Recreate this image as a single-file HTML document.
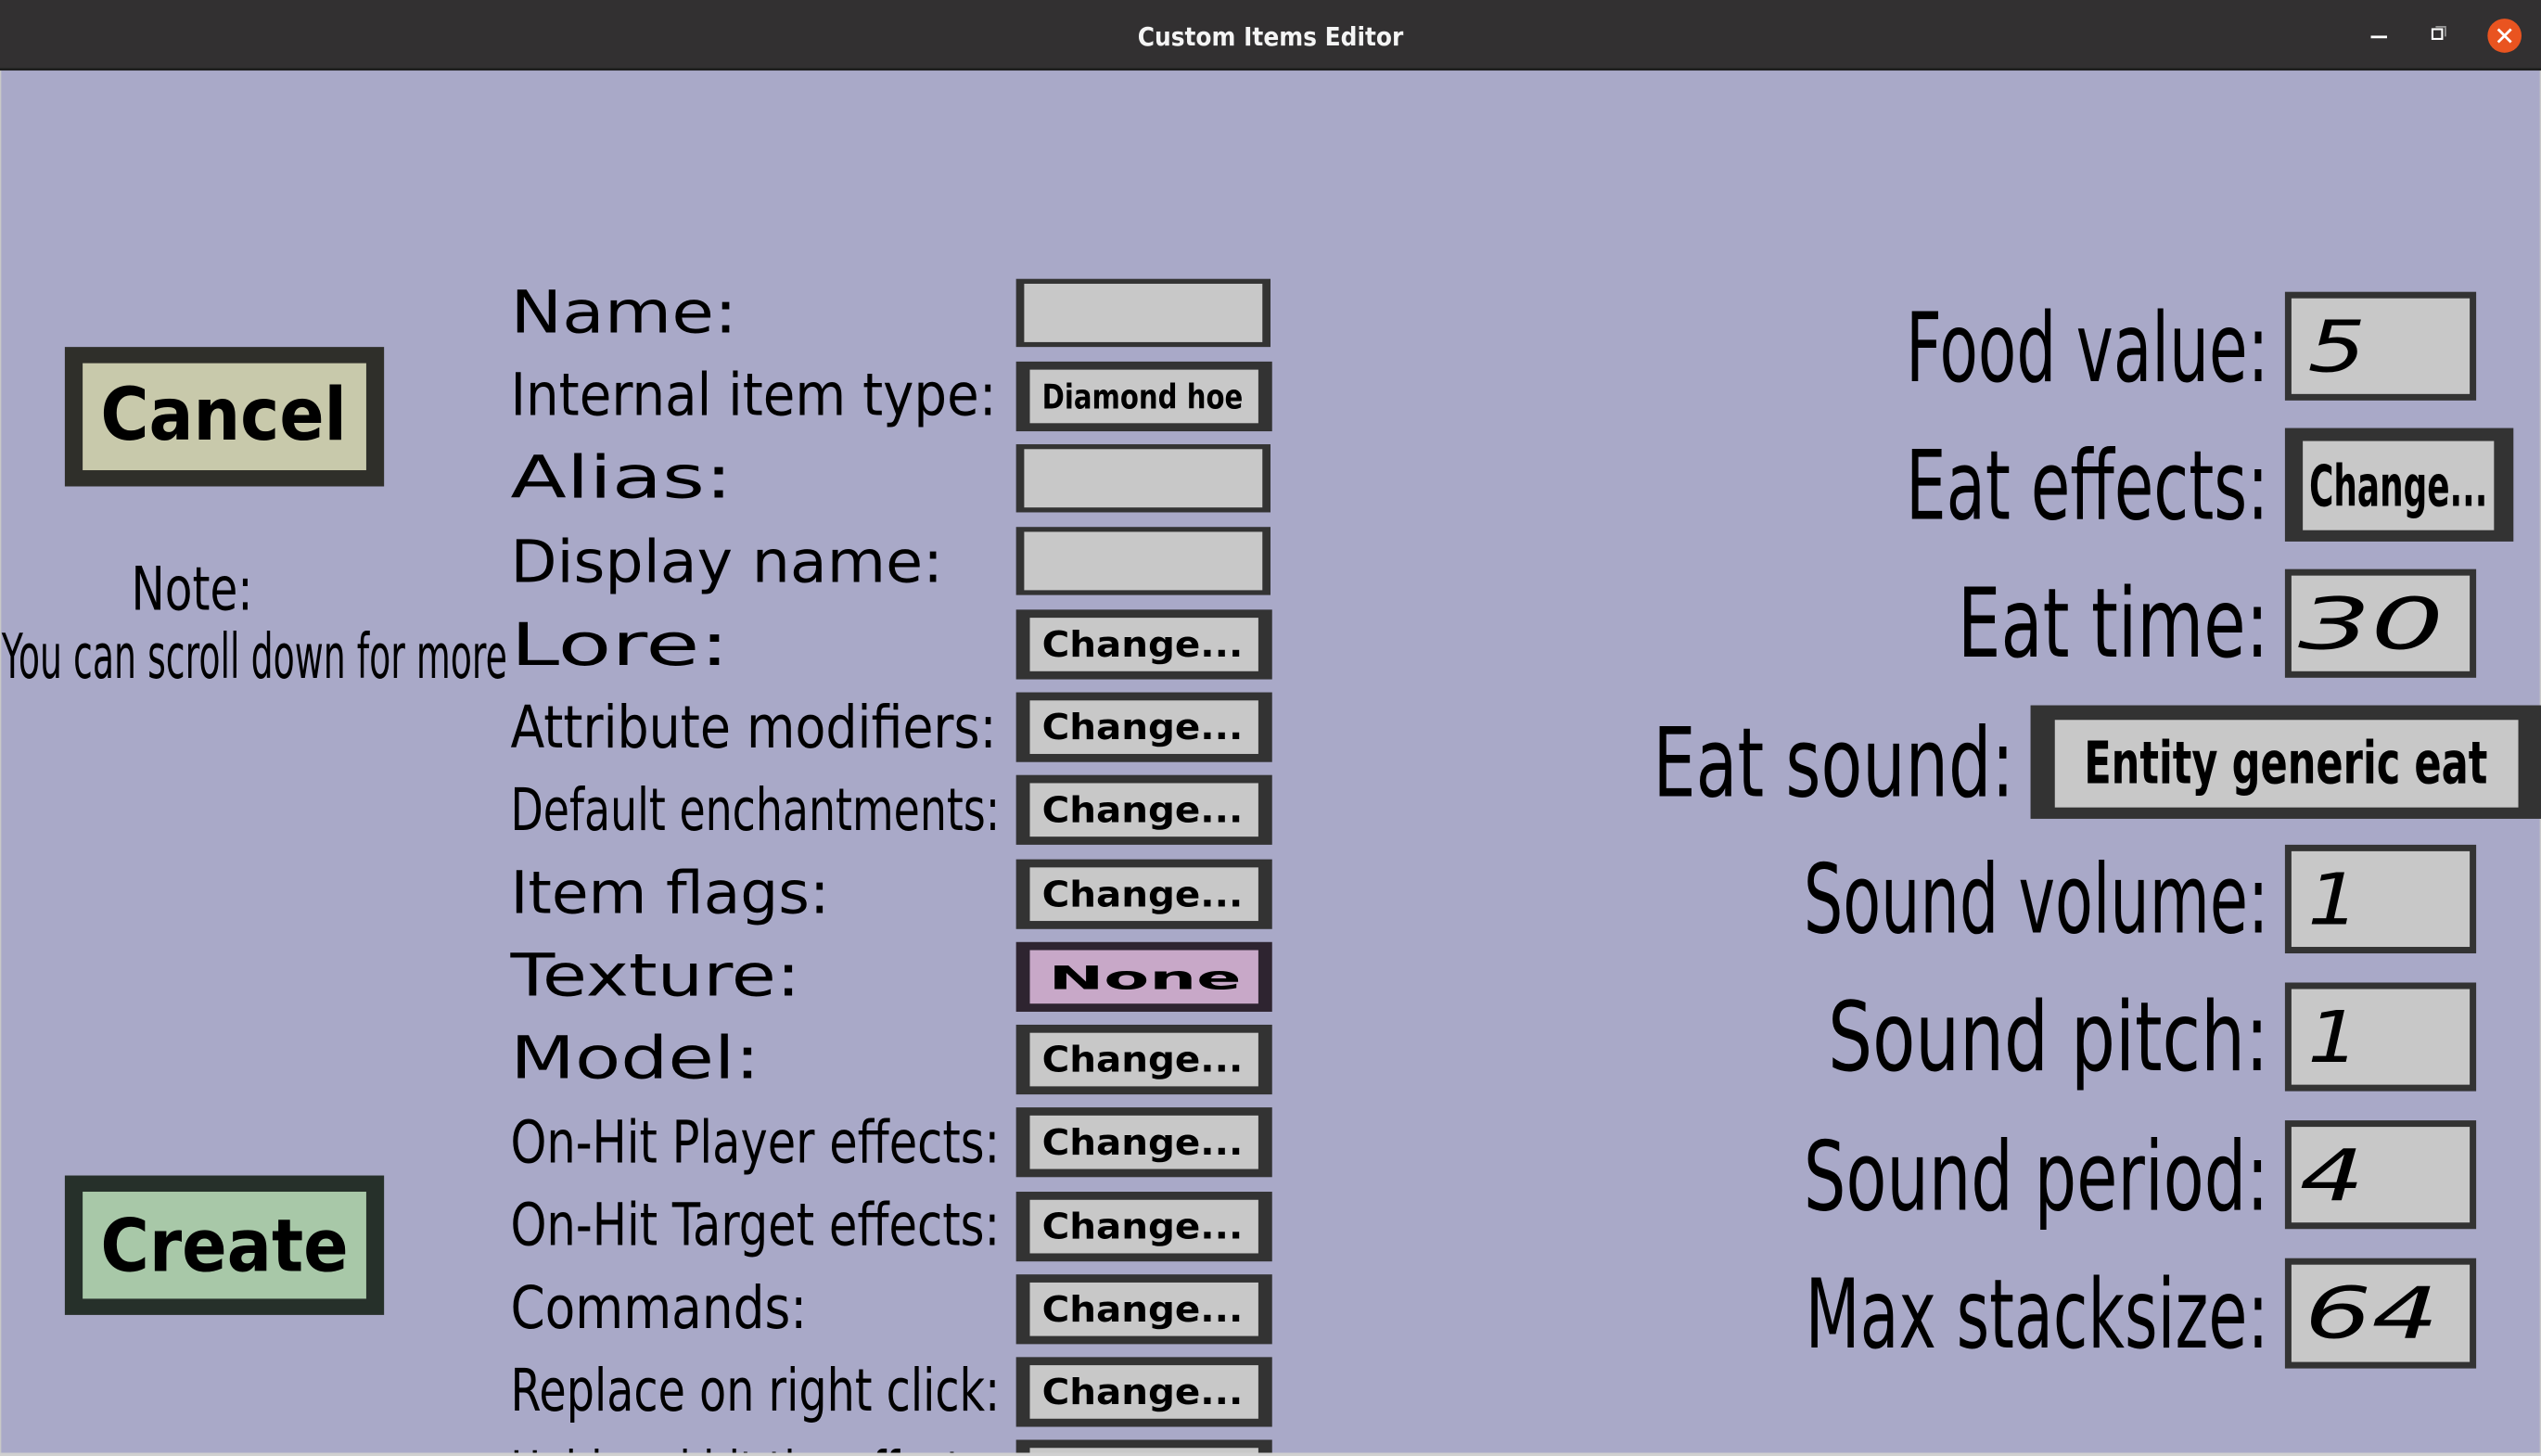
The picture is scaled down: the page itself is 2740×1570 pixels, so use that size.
<!DOCTYPE html>
<html><head><meta charset="utf-8"><style>
html,body{margin:0;padding:0;width:2740px;height:1570px;overflow:hidden;background:#a9a9c8}
svg{display:block}
text{font-family:"DejaVu Sans","Liberation Sans",sans-serif;fill:#000}
.b{font-weight:bold}
</style></head><body>
<svg width="2740" height="1570" viewBox="0 0 1568 898" preserveAspectRatio="none" xmlns="http://www.w3.org/2000/svg">
<rect x="0" y="0" width="1568" height="898" fill="#a9a9c8"/>
<rect x="0" y="0" width="1568" height="898" fill="none" stroke="#c8c8c8" stroke-width="1.5"/>
<rect x="0" y="0" width="1568" height="43" fill="#323031"/>
<rect x="0" y="42" width="1568" height="1.5" fill="#1e1e1e"/>
<text x="702" y="28" font-size="16" class="b" style="fill:#f4f4f4" textLength="164" lengthAdjust="spacingAndGlyphs">Custom Items Editor</text>
<rect x="1463" y="22" width="10" height="1.6" fill="#fff"/>
<rect x="1501" y="18" width="6" height="6" fill="none" stroke="#fff" stroke-width="1.2"/>
<path d="M1503 16.5 H1509 V22.5" fill="none" stroke="#999" stroke-width="1"/>
<circle cx="1545.5" cy="22" r="10.5" fill="#e95420"/>
<path d="M1541.5 18 L1549.5 26 M1549.5 18 L1541.5 26" stroke="#fff" stroke-width="1.6"/>

<rect x="40" y="214" width="197" height="86" fill="#2f2f2a"/>
<rect x="51" y="224" width="175" height="66" fill="#c8c9ab"/>
<text x="62" y="271" font-size="45" class="b" textLength="152" lengthAdjust="spacingAndGlyphs">Cancel</text>
<rect x="40" y="725" width="197" height="86" fill="#26302a"/>
<rect x="51" y="735" width="175" height="66" fill="#a8c8a8"/>
<text x="62" y="784" font-size="45" class="b" textLength="153" lengthAdjust="spacingAndGlyphs">Create</text>

<text x="81" y="376" font-size="37" textLength="75" lengthAdjust="spacingAndGlyphs">Note:</text>
<text x="1" y="418" font-size="38" textLength="312" lengthAdjust="spacingAndGlyphs">You can scroll down for more</text>

<g font-size="36">
<text x="315" y="205" textLength="140" lengthAdjust="spacingAndGlyphs">Name:</text>
<text x="315" y="256" textLength="300" lengthAdjust="spacingAndGlyphs">Internal item type:</text>
<text x="315" y="307" textLength="137" lengthAdjust="spacingAndGlyphs">Alias:</text>
<text x="315" y="359" textLength="267" lengthAdjust="spacingAndGlyphs">Display name:</text>
<text x="315" y="410" textLength="135" lengthAdjust="spacingAndGlyphs">Lore:</text>
<text x="315" y="461" textLength="300" lengthAdjust="spacingAndGlyphs">Attribute modifiers:</text>
<text x="315" y="512" textLength="302" lengthAdjust="spacingAndGlyphs">Default enchantments:</text>
<text x="315" y="563" textLength="197" lengthAdjust="spacingAndGlyphs">Item flags:</text>
<text x="315" y="614" textLength="179" lengthAdjust="spacingAndGlyphs">Texture:</text>
<text x="315" y="665" textLength="154" lengthAdjust="spacingAndGlyphs">Model:</text>
<text x="315" y="717" textLength="302" lengthAdjust="spacingAndGlyphs">On-Hit Player effects:</text>
<text x="315" y="768" textLength="302" lengthAdjust="spacingAndGlyphs">On-Hit Target effects:</text>
<text x="315" y="819" textLength="183" lengthAdjust="spacingAndGlyphs">Commands:</text>
<text x="315" y="870" textLength="302" lengthAdjust="spacingAndGlyphs">Replace on right click:</text>
<text x="315" y="921" textLength="300" lengthAdjust="spacingAndGlyphs">Held and hit the effects:</text>
</g>

<g>
<rect x="627" y="172" width="157" height="42" fill="#333"/><rect x="632" y="175" width="147" height="36" fill="#c8c8c8"/>
<rect x="627" y="223" width="158" height="43" fill="#333"/><rect x="635.5" y="228" width="141" height="33" fill="#c8c8c8"/>
<text x="643" y="252" font-size="21" class="b" textLength="124" lengthAdjust="spacingAndGlyphs">Diamond hoe</text>
<rect x="627" y="274" width="157" height="42" fill="#333"/><rect x="632" y="277" width="147" height="36" fill="#c8c8c8"/>
<rect x="627" y="325" width="157" height="42" fill="#333"/><rect x="632" y="328" width="147" height="36" fill="#c8c8c8"/>
</g>
<g font-size="22" class="b">
<rect x="627" y="376" width="158" height="43" fill="#333"/><rect x="635.5" y="381" width="141" height="33" fill="#c8c8c8"/>
<text x="643" y="405" textLength="124" lengthAdjust="spacingAndGlyphs">Change...</text>
<rect x="627" y="427" width="158" height="43" fill="#333"/><rect x="635.5" y="432" width="141" height="33" fill="#c8c8c8"/>
<text x="643" y="456" textLength="124" lengthAdjust="spacingAndGlyphs">Change...</text>
<rect x="627" y="478" width="158" height="43" fill="#333"/><rect x="635.5" y="483" width="141" height="33" fill="#c8c8c8"/>
<text x="643" y="507" textLength="124" lengthAdjust="spacingAndGlyphs">Change...</text>
<rect x="627" y="530" width="158" height="43" fill="#333"/><rect x="635.5" y="535" width="141" height="33" fill="#c8c8c8"/>
<text x="643" y="559" textLength="124" lengthAdjust="spacingAndGlyphs">Change...</text>
<rect x="627" y="581" width="158" height="43" fill="#2e2430"/><rect x="635.5" y="586" width="141" height="33" fill="#c8a8c8"/>
<text x="647" y="610" font-size="20" textLength="119" lengthAdjust="spacingAndGlyphs">None</text>
<rect x="627" y="632" width="158" height="43" fill="#333"/><rect x="635.5" y="637" width="141" height="33" fill="#c8c8c8"/>
<text x="643" y="661" textLength="124" lengthAdjust="spacingAndGlyphs">Change...</text>
<rect x="627" y="683" width="158" height="43" fill="#333"/><rect x="635.5" y="688" width="141" height="33" fill="#c8c8c8"/>
<text x="643" y="712" textLength="124" lengthAdjust="spacingAndGlyphs">Change...</text>
<rect x="627" y="735" width="158" height="43" fill="#333"/><rect x="635.5" y="740" width="141" height="33" fill="#c8c8c8"/>
<text x="643" y="764" textLength="124" lengthAdjust="spacingAndGlyphs">Change...</text>
<rect x="627" y="786" width="158" height="43" fill="#333"/><rect x="635.5" y="791" width="141" height="33" fill="#c8c8c8"/>
<text x="643" y="815" textLength="124" lengthAdjust="spacingAndGlyphs">Change...</text>
<rect x="627" y="837" width="158" height="43" fill="#333"/><rect x="635.5" y="842" width="141" height="33" fill="#c8c8c8"/>
<text x="643" y="866" textLength="124" lengthAdjust="spacingAndGlyphs">Change...</text>
<rect x="627" y="888" width="158" height="43" fill="#333"/><rect x="635.5" y="893" width="141" height="33" fill="#c8c8c8"/>
</g>

<g font-size="59">
<text x="1176" y="235" textLength="224" lengthAdjust="spacingAndGlyphs">Food value:</text>
<text x="1176" y="320" textLength="224" lengthAdjust="spacingAndGlyphs">Eat effects:</text>
<text x="1208" y="405" textLength="192" lengthAdjust="spacingAndGlyphs">Eat time:</text>
<text x="1020" y="491" textLength="223" lengthAdjust="spacingAndGlyphs">Eat sound:</text>
<text x="1113" y="575" textLength="287" lengthAdjust="spacingAndGlyphs">Sound volume:</text>
<text x="1128" y="660" textLength="272" lengthAdjust="spacingAndGlyphs">Sound pitch:</text>
<text x="1113" y="746" textLength="287" lengthAdjust="spacingAndGlyphs">Sound period:</text>
<text x="1114" y="831" textLength="286" lengthAdjust="spacingAndGlyphs">Max stacksize:</text>
</g>
<g>
<rect x="1410" y="180" width="118" height="67" fill="#333"/><rect x="1414" y="184" width="110" height="59" fill="#c8c8c8"/>
<rect x="1410" y="351" width="118" height="67" fill="#333"/><rect x="1414" y="355" width="110" height="59" fill="#c8c8c8"/>
<rect x="1410" y="521" width="118" height="67" fill="#333"/><rect x="1414" y="525" width="110" height="59" fill="#c8c8c8"/>
<rect x="1410" y="606" width="118" height="67" fill="#333"/><rect x="1414" y="610" width="110" height="59" fill="#c8c8c8"/>
<rect x="1410" y="691" width="118" height="67" fill="#333"/><rect x="1414" y="695" width="110" height="59" fill="#c8c8c8"/>
<rect x="1410" y="776" width="118" height="68" fill="#333"/><rect x="1414" y="780" width="110" height="60" fill="#c8c8c8"/>
<rect x="1410" y="264" width="141" height="70" fill="#333"/><rect x="1421" y="272" width="118" height="55" fill="#c8c8c8"/>
<rect x="1253" y="435" width="315" height="70" fill="#333"/><rect x="1268" y="444" width="286" height="54" fill="#c8c8c8"/>
</g>
<g font-size="44" font-style="italic">
<text x="1424" y="229" textLength="36" lengthAdjust="spacingAndGlyphs">5</text>
<text x="1418" y="400" textLength="90" lengthAdjust="spacingAndGlyphs">30</text>
<text x="1424" y="570" textLength="32" lengthAdjust="spacingAndGlyphs">1</text>
<text x="1424" y="655" textLength="32" lengthAdjust="spacingAndGlyphs">1</text>
<text x="1419" y="740" textLength="40" lengthAdjust="spacingAndGlyphs">4</text>
<text x="1422" y="825" textLength="83" lengthAdjust="spacingAndGlyphs">64</text>
</g>
<text x="1425" y="312" font-size="35" class="b" textLength="110" lengthAdjust="spacingAndGlyphs">Change...</text>
<text x="1286" y="483" font-size="36" class="b" textLength="249" lengthAdjust="spacingAndGlyphs">Entity generic eat</text>
<rect x="0" y="896" width="1568" height="2" fill="#d0d0d0"/>
</svg>
</body></html>
